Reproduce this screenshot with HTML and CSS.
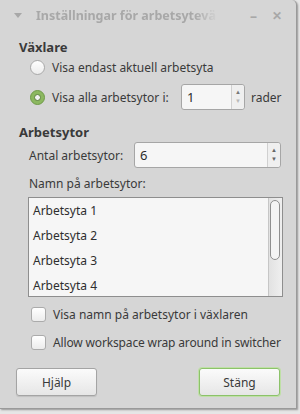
FILE: index.html
```html
<!DOCTYPE html>
<html>
<head>
<meta charset="utf-8">
<link rel="stylesheet" href="styles.css">
</head>
<body>
<div class="window">
  <div class="titlebar">
    <span class="tri"></span>
    <span class="title">Inställningar för arbetsytevä</span>
    <span class="wbtn min">–</span>
    <span class="wbtn close">✕</span>
  </div>
  <div class="content">
    <div class="heading">Växlare</div>
    <div class="row radio-row">
      <span class="radio"></span>
      <span>Visa endast aktuell arbetsyta</span>
    </div>
    <div class="row radio-row r2">
      <span class="radio on"><span class="dot"></span></span>
      <span class="lbl">Visa alla arbetsytor i:</span>
      <div class="spin small">
        <span class="val">1</span>
        <span class="arrows"><span class="up dim">▲</span><span class="dn dim">▼</span></span>
      </div>
      <span class="unit">rader</span>
    </div>
    <div class="heading h2">Arbetsytor</div>
    <div class="row count-row">
      <span class="lbl2">Antal arbetsytor:</span>
      <div class="spin wide">
        <span class="val">6</span>
        <span class="arrows"><span class="up">▲</span><span class="dn">▼</span></span>
      </div>
    </div>
    <div class="names-label">Namn på arbetsytor:</div>
    <div class="list">
      <div class="items">
        <div class="item">Arbetsyta 1</div>
        <div class="item">Arbetsyta 2</div>
        <div class="item">Arbetsyta 3</div>
        <div class="item">Arbetsyta 4</div>
      </div>
      <div class="scroll"><div class="thumb"></div></div>
    </div>
    <div class="row check-row c1">
      <span class="check"></span>
      <span>Visa namn på arbetsytor i växlaren</span>
    </div>
    <div class="row check-row c2">
      <span class="check"></span>
      <span class="tight">Allow workspace wrap around in switcher</span>
    </div>
    <div class="buttons">
      <button class="btn">Hjälp</button>
      <button class="btn default">Stäng</button>
    </div>
  </div>
</div>
</body>
</html>
```
FILE: styles.css
```css
html, body {
  margin: 0;
  padding: 0;
}
body {
  width: 300px;
  height: 414px;
  background: #e6e6e6;
  font-family: "Noto Sans", "Open Sans", sans-serif;
  font-size: 12px;
  color: #3a3a3a;
  overflow: hidden;
}
.window {
  width: 296px;
  height: 408px;
  background: #d6d6d6;
  border-right: 1px solid #9a9a9a;
  border-bottom: 1px solid #9a9a9a;
  border-top-right-radius: 5px;
  box-shadow: 1px 1px 2px rgba(0,0,0,0.35);
  box-sizing: content-box;
  display: flex;
  flex-direction: column;
}
.titlebar {
  height: 30px;
  display: flex;
  align-items: center;
  padding-left: 14px;
  padding-right: 14px;
  color: #a8a8a8;
  box-sizing: border-box;
}
.tri {
  width: 0;
  height: 0;
  border-left: 4px solid transparent;
  border-right: 4px solid transparent;
  border-top: 5px solid #a8a8a8;
  margin-right: 14px;
  margin-top: 1px;
}
.title {
  font-weight: bold;
  font-size: 12.5px;
  white-space: nowrap;
  -webkit-mask-image: linear-gradient(to right, #000 88%, rgba(0,0,0,0.1) 100%);
  mask-image: linear-gradient(to right, #000 88%, rgba(0,0,0,0.1) 100%);
}
.wbtn {
  font-weight: bold;
  font-size: 14px;
  color: #a8a8a8;
}
.min { margin-left: auto; }
.close { margin-left: 15px; font-size: 12px; }
.content {
  padding: 4px 0 0 19px;
  display: flex;
  flex-direction: column;
}
.heading {
  font-weight: bold;
  font-size: 13px;
  height: 18px;
  line-height: 18px;
  margin-top: 4px;
}
.h2 { margin-top: 12px; }
.row {
  display: flex;
  align-items: center;
}
.radio-row {
  padding-left: 11px;
  height: 22px;
}
.r2 {
  height: 28px;
  margin-top: 5px;
}
.radio {
  width: 13px;
  height: 13px;
  border-radius: 50%;
  border: 1px solid #a9a9a9;
  background: linear-gradient(#ffffff, #ececec);
  margin-right: 7px;
  display: flex;
  align-items: center;
  justify-content: center;
  box-sizing: content-box;
}
.radio.on {
  border-color: #6f9a48;
  background: #8cb860;
}
.dot {
  width: 7px;
  height: 7px;
  border-radius: 50%;
  background: #f2f2f2;
  border: 1px solid #5a7f3a;
  box-sizing: border-box;
}
.lbl { width: 129px; }
.spin {
  display: flex;
  height: 26px;
  border: 1px solid #a6a6a6;
  border-radius: 3px;
  background: #f6f6f6;
  box-sizing: border-box;
}
.spin .val {
  flex: 1;
  padding-left: 5px;
  line-height: 24px;
  font-size: 13px;
  color: #2b2b2b;
}
.spin .arrows {
  width: 12px;
  border-left: 1px solid #d0d0d0;
  background: #efefef;
  display: flex;
  flex-direction: column;
  align-items: center;
  justify-content: center;
  font-size: 6px;
  line-height: 9px;
  color: #666;
  border-radius: 0 3px 3px 0;
}
.spin .arrows .dim { color: #b8b8b8; }
.spin .arrows .up.dim { color: #777; }
.small { width: 64px; }
.unit { margin-left: 6px; }
.count-row {
  padding-left: 10px;
  height: 26px;
  margin-top: 1px;
}
.lbl2 { width: 105px; }
.wide { width: 147px; }
.names-label {
  padding-left: 10px;
  margin-top: 7px;
  height: 18px;
  line-height: 18px;
}
.list {
  margin: 4px 0 0 9px;
  width: 255px;
  height: 100px;
  border: 1px solid #8e8e8e;
  background: #f6f6f6;
  display: flex;
  box-sizing: border-box;
}
.items {
  flex: 1;
}
.item {
  height: 25px;
  line-height: 25px;
  padding-left: 4px;
  color: #2e2e2e;
}
.scroll {
  width: 14px;
  border-left: 1px solid #c6c6c6;
  background: linear-gradient(to right, #e2e2e2, #efefef);
  padding: 2px 1px;
  box-sizing: border-box;
}
.thumb {
  width: 10px;
  height: 60px;
  border: 1px solid #8f8f8f;
  border-radius: 5px;
  background: #f4f4f4;
  box-sizing: border-box;
}
.check-row {
  padding-left: 12px;
  height: 20px;
}
.c1 { margin-top: 7px; }
.c2 { margin-top: 8px; }
.tight { letter-spacing: -0.15px; }
.check {
  width: 13px;
  height: 13px;
  border: 1px solid #ababab;
  border-radius: 3px;
  background: linear-gradient(#ffffff, #ececec);
  margin-right: 7px;
  box-sizing: content-box;
}
.buttons {
  display: flex;
  justify-content: space-between;
  margin: 16px 0 0 -3px;
  width: 264px;
}
.btn {
  font-family: "Noto Sans", "Open Sans", sans-serif;
  font-size: 12px;
  color: #3a3a3a;
  width: 81px;
  height: 28px;
  border: 1px solid #a4a4a4;
  border-radius: 3px;
  background: linear-gradient(#fbfbfb, #e6e6e6);
  box-shadow: 0 1px 1px rgba(0,0,0,0.1);
  padding: 0;
}
.btn.default {
  border-color: #8cc26a;
  box-shadow: 0 0 0 1px #bfe0a6;
}
```
